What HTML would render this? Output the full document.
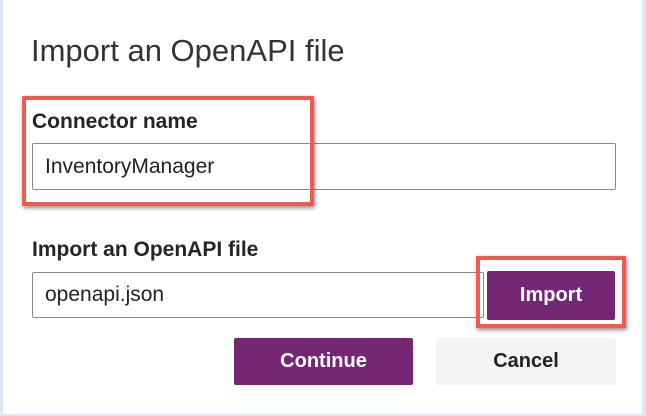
<!DOCTYPE html>
<html><head><style>
html,body{margin:0;padding:0;background:#fff;}
body{width:646px;height:416px;position:relative;overflow:hidden;font-family:"Liberation Sans",sans-serif;color:#252525;}
.edge{position:absolute;background:#dde6f7;}
.a{position:absolute;box-sizing:border-box;}
.red{border:4px solid #f25a4f;box-shadow:1px 2px 4px rgba(0,0,0,.45);}
.inp{border:1px solid #8a8a8a;border-radius:2px;background:#fff;font-size:21px;color:#222;padding-left:12px;display:flex;align-items:center;}
.btn{border-radius:2px;display:flex;align-items:center;justify-content:center;font-size:20px;font-weight:bold;}
</style></head><body>
<div class="edge" style="left:0;top:0;width:3px;height:416px"></div>
<div class="edge" style="right:0;top:0;width:4px;height:416px"></div>
<div class="edge" style="left:0;bottom:0;width:646px;height:2px"></div>
<div class="a" style="left:31px;top:32px;font-size:31px;color:#333;line-height:38px">Import an OpenAPI file</div>
<div class="a" style="left:32px;top:109px;font-size:21px;font-weight:bold;line-height:26px">Connector name</div>
<div class="a inp" style="left:32px;top:143px;width:584px;height:47px">InventoryManager</div>
<div class="a red" style="left:22px;top:96px;width:292px;height:110px"></div>
<div class="a" style="left:32px;top:237px;font-size:21px;font-weight:bold;line-height:26px">Import an OpenAPI file</div>
<div class="a inp" style="left:32px;top:272px;width:452px;height:46px">openapi.json</div>
<div class="a btn" style="left:487px;top:271px;width:128px;height:49px;background:#742774;color:#fff">Import</div>
<div class="a red" style="left:476px;top:256px;width:150px;height:72px"></div>
<div class="a btn" style="left:234px;top:338px;width:179px;height:47px;background:#742774;color:#fff">Continue</div>
<div class="a btn" style="left:436px;top:338px;width:180px;height:47px;background:#f3f3f3;color:#222">Cancel</div>
</body></html>
